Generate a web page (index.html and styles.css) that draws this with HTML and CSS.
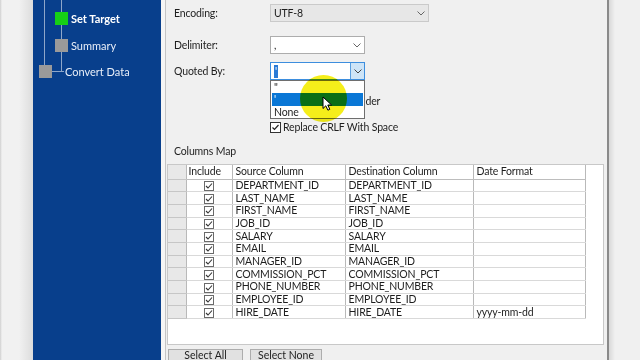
FILE: index.html
```html
<!DOCTYPE html>
<html>

<head>
    <title>Convert Wizard - Set Target</title>
    <link rel="stylesheet" href="styles.css">
</head>

<body>
    <div class="screen">
        <div class="edge"></div>
        <nav class="steps">
            <svg class="tree" width="128" height="80">
                <path d="M11.5 0 V66 M28.5 0 V71.5 M19 71.5 H31" stroke="#8ea6c9" fill="none" />
            </svg>
            <div class="step current"><span class="box"></span>Set Target</div>
            <div class="step"><span class="box"></span>Summary</div>
            <div class="step root"><span class="box"></span>Convert Data</div>
        </nav>
        <div class="split"></div>
        <main class="page">
            <div class="field enc">
                <label>Encoding:</label>
                <div class="combo wide">UTF-8
                    <span class="arrow"><svg width="8" height="5"><polyline points="0.5,0.5 4,4 7.5,0.5" fill="none" stroke="#666" /></svg></span>
                </div>
            </div>
            <div class="field delim">
                <label>Delimiter:</label>
                <div class="combo narrow">,
                    <span class="arrow"><svg width="8" height="5"><polyline points="0.5,0.5 4,4 7.5,0.5" fill="none" stroke="#666" /></svg></span>
                </div>
            </div>
            <div class="field quote">
                <label>Quoted By:</label>
                <div class="combo narrow focus"><span class="hl">'</span>
                    <span class="arrow"><svg width="8" height="5"><polyline points="0.5,0.5 4,4 7.5,0.5" fill="none" stroke="#444" /></svg></span>
                    <div class="list">
                        <div>"</div>
                        <div class="sel">'</div>
                        <div>None</div>
                    </div>
                </div>
            </div>
            <div class="check header-row">
                <span class="cb"><svg width="9" height="9"><polyline points="1.5,4.5 3.5,6.5 7.5,2" fill="none" stroke="#222" stroke-width="1.2" /></svg></span>First Row Has Header
            </div>
            <div class="check crlf">
                <span class="cb"><svg width="9" height="9"><polyline points="1.5,4.5 3.5,6.5 7.5,2" fill="none" stroke="#222" stroke-width="1.2" /></svg></span>Replace CRLF With Space
            </div>
            <div class="caption">Columns Map</div>
            <div class="grid">
                <table>
                    <tr>
                        <th class="rh"></th>
                        <th class="inc">Include</th>
                        <th class="src">Source Column</th>
                        <th class="dst">Destination Column</th>
                        <th class="fmt">Date Format</th>
                    </tr>
                    <tr><td class="rh"></td><td class="inc"><span class="tick"></span></td><td>DEPARTMENT_ID</td><td>DEPARTMENT_ID</td><td></td></tr>
                    <tr><td class="rh"></td><td class="inc"><span class="tick"></span></td><td>LAST_NAME</td><td>LAST_NAME</td><td></td></tr>
                    <tr><td class="rh"></td><td class="inc"><span class="tick"></span></td><td>FIRST_NAME</td><td>FIRST_NAME</td><td></td></tr>
                    <tr><td class="rh"></td><td class="inc"><span class="tick"></span></td><td>JOB_ID</td><td>JOB_ID</td><td></td></tr>
                    <tr><td class="rh"></td><td class="inc"><span class="tick"></span></td><td>SALARY</td><td>SALARY</td><td></td></tr>
                    <tr><td class="rh"></td><td class="inc"><span class="tick"></span></td><td>EMAIL</td><td>EMAIL</td><td></td></tr>
                    <tr><td class="rh"></td><td class="inc"><span class="tick"></span></td><td>MANAGER_ID</td><td>MANAGER_ID</td><td></td></tr>
                    <tr><td class="rh"></td><td class="inc"><span class="tick"></span></td><td>COMMISSION_PCT</td><td>COMMISSION_PCT</td><td></td></tr>
                    <tr><td class="rh"></td><td class="inc"><span class="tick"></span></td><td>PHONE_NUMBER</td><td>PHONE_NUMBER</td><td></td></tr>
                    <tr><td class="rh"></td><td class="inc"><span class="tick"></span></td><td>EMPLOYEE_ID</td><td>EMPLOYEE_ID</td><td></td></tr>
                    <tr><td class="rh"></td><td class="inc"><span class="tick"></span></td><td>HIRE_DATE</td><td>HIRE_DATE</td><td>yyyy-mm-dd</td></tr>
                </table>
            </div>
            <div class="buttons">
                <button class="btn all">Select All</button>
                <button class="btn none">Select None</button>
            </div>
            <div class="spot"></div>
            <svg class="pointer" width="12" height="16">
                <path d="M1 1 V12.5 L3.8 9.8 L5.9 14.2 L7.8 13.3 L5.8 9 H9.6 Z" fill="#fff" stroke="#000" stroke-width="1" stroke-linejoin="round" />
            </svg>
        </main>
        <div class="rail"></div>
        <div class="outside"></div>
    </div>
</body>

</html>
```

FILE: styles.css
```css
* {
    box-sizing: border-box;
}

body {
    margin: 0;
    width: 640px;
    height: 360px;
    overflow: hidden;
    font-family: Lato, "Liberation Sans", sans-serif;
    font-size: 10.5px;
    letter-spacing: -0.15px;
    color: #1e1e1e;
    background: #f0f0f0;
}

.screen {
    display: flex;
    height: 360px;
}

.edge {
    width: 33px;
    background: linear-gradient(to right, #cfcfcf 0, #f1f1f1 2px, #f1f1f1 19px, #e4e4e4 28px, #dcdcdc 33px);
}

.steps {
    position: relative;
    width: 128px;
    background: #083f8c;
    display: flex;
    flex-direction: column;
    gap: 13.5px;
    padding-top: 12px;
    color: #fff;
}

.tree {
    position: absolute;
    left: 0;
    top: 0;
}

.step {
    position: relative;
    display: flex;
    align-items: center;
    height: 13px;
    padding-left: 22px;
    font-size: 11px;
    letter-spacing: 0;
    color: #e8eef8;
}

.step .box {
    width: 13px;
    height: 13px;
    background: #9a9a9a;
    margin-right: 3px;
}

.step.current {
    font-weight: bold;
    color: #fff;
}

.step.current .box {
    background: #16d016;
}

.step.root {
    padding-left: 6px;
}

.step.root .box {
    margin-right: 13px;
}

.split {
    width: 5px;
    background: #f5f5f5;
    border-right: 1px solid #c4c4c4;
}

.page {
    position: relative;
    width: 441px;
    background: #f0f0f0;
}

.rail {
    width: 2px;
    background: #8a8a8a;
}

.outside {
    flex: 1;
    background: linear-gradient(to right, #d8d8d8, #f0f0f0 6px);
}

/* form fields */
.field {
    display: flex;
    align-items: center;
    height: 18px;
    padding-left: 8px;
}

.field label {
    width: 96px;
}

.enc {
    margin-top: 4px;
}

.delim {
    margin-top: 14px;
}

.quote {
    margin-top: 8px;
}

.combo {
    position: relative;
    height: 18px;
    border: 1px solid #adadad;
    background: #fff;
    display: flex;
    align-items: center;
    padding-left: 3px;
}

.combo.wide {
    width: 159px;
    background: #e7e7e7;
    border-color: #cacaca;
}

.combo.narrow {
    width: 95px;
}

.combo.focus {
    border-color: #3d8ede;
}

.combo .arrow {
    position: absolute;
    right: 0;
    top: 0;
    bottom: 0;
    width: 14px;
    display: flex;
    align-items: center;
    justify-content: center;
}

.combo.focus .arrow {
    background: #cde4f7;
    border-left: 1px solid #5b9fe0;
}

.hl {
    background: #2a7ad6;
    color: #fff;
    padding: 0 1px;
    line-height: 13px;
}

.list {
    position: absolute;
    left: -1px;
    top: 17px;
    width: 95px;
    border: 1px solid #6e6e6e;
    background: #fff;
    z-index: 2;
    padding: 0 1px;
}

.list div {
    height: 12.3px;
    line-height: 12.3px;
    padding-left: 2px;
}

.list .sel {
    background: #0a77d6;
    color: #fff;
}

.check {
    display: flex;
    align-items: center;
    height: 12px;
    padding-left: 104px;
}

.check .cb {
    width: 11px;
    height: 11px;
    border: 1px solid #333;
    background: #fff;
    margin-right: 2px;
    display: flex;
    align-items: center;
    justify-content: center;
}

.header-row {
    margin-top: 15px;
}

.crlf {
    margin-top: 14px;
}

.caption {
    margin-top: 12px;
    padding-left: 8px;
    height: 12px;
    line-height: 12px;
}

/* columns grid */
.grid {
    margin: 7px 0 0 1px;
    width: 437px;
    height: 181px;
    background: #fff;
    border: 1px solid #c8c8c8;
}

table {
    border-collapse: collapse;
    table-layout: fixed;
    width: 417px;
}

th,
td {
    padding: 0 0 0 3px;
    text-align: left;
    font-weight: normal;
    white-space: nowrap;
    overflow: hidden;
    border: 1px solid #d9d9d9;
    border-left-color: #b9b9b9;
    border-right-color: #b9b9b9;
    height: 12.7px;
    line-height: 11px;
}

th {
    height: 14px;
    border-top: none;
    border-bottom-color: #bdbdbd;
}

tr > :first-child {
    border-left: none;
}

.rh {
    width: 18px;
    background: #e8e8e8;
    border-bottom-color: #c6c6c6;
}

th.inc {
    width: 46px;
    padding-left: 2px;
}

td.inc {
    text-align: center;
    padding: 0;
}

th.src {
    width: 113px;
}

th.dst {
    width: 128px;
}

th.fmt {
    width: 112px;
}

.tick {
    display: inline-block;
    width: 10px;
    height: 10px;
    border: 1px solid #6a6a6a;
    vertical-align: middle;
    background: no-repeat center / 8px 8px url("data:image/svg+xml,%3Csvg xmlns='http://www.w3.org/2000/svg' width='8' height='8'%3E%3Cpolyline points='1,4 3,6 7,1.5' fill='none' stroke='%23333' stroke-width='1.1'/%3E%3C/svg%3E");
}

.buttons {
    display: flex;
    gap: 7px;
    margin: 4px 0 0 2px;
}

.btn {
    height: 23px;
    border: 1px solid #adadad;
    background: #e1e1e1;
    font: inherit;
    color: #1e1e1e;
    padding: 1px 0 0;
    line-height: 8px;
    display: flex;
    align-items: flex-start;
    justify-content: center;
}

.btn.all {
    width: 75px;
}

.btn.none {
    width: 72px;
}

/* mouse highlight overlay */
.spot {
    position: absolute;
    left: 134px;
    top: 75px;
    width: 47px;
    height: 47px;
    border-radius: 50%;
    background: #f5ee1a;
    mix-blend-mode: multiply;
    z-index: 3;
}

.pointer {
    position: absolute;
    left: 156px;
    top: 96px;
    z-index: 4;
}
```
